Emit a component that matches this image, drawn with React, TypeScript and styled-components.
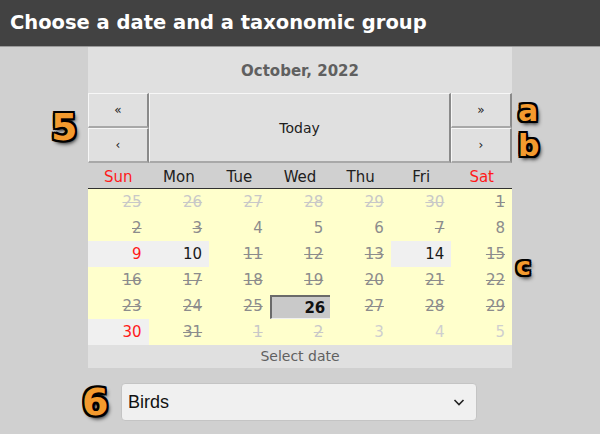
import styled, { createGlobalStyle } from "styled-components";

const GlobalStyle = createGlobalStyle`
    html, body {
        margin: 0;
        padding: 0;
        background: #d0d0d0;
    }
    body {
        font-family: "DejaVu Sans", Verdana, sans-serif;
    }
`;

const Page = styled.div`
    position: relative;
    width: 600px;
    height: 434px;
    overflow: hidden;
    background: #d0d0d0;
`;

const Header = styled.div`
    height: 47px;
    background: #424242;
    color: #ffffff;
    font-weight: bold;
    font-size: 19.5px;
    line-height: 46px;
    padding-left: 10px;
    border-bottom: 1px solid #9a9a9a;
    box-sizing: border-box;
`;

const Calendar = styled.div`
    width: 424px;
    margin: 0 auto;
    background: #e0e0e0;
`;

const MonthTitle = styled.div`
    height: 46px;
    line-height: 48px;
    text-align: center;
    font-weight: bold;
    font-size: 15px;
    color: #606060;
`;

const NavRow = styled.div`
    display: grid;
    grid-template-columns: 61px 1fr 61px;
    grid-template-rows: 35px 35px;
    height: 70px;
`;

const NavButton = styled.div<{col: number, row: number, tall?: boolean}>`
    grid-column: ${props => props.col};
    grid-row: ${props => props.tall ? "1 / span 2" : props.row};
    display: flex;
    align-items: center;
    justify-content: center;
    box-sizing: border-box;
    background: #e0e0e0;
    border-style: solid;
    border-width: 1px 2px 2px 1px;
    border-color: #f7f7f7 #8a8a8a #a8a8a8 #f7f7f7;
    font-size: ${props => props.tall ? "14px" : "12px"};
    color: #202020;
`;

const DayHeadRow = styled.div`
    display: grid;
    grid-template-columns: repeat(7, 1fr);
    height: 26px;
    background: #d0d0d0;
    border-bottom: 1px solid #303030;
    box-sizing: border-box;
`;

const DayHead = styled.div<{weekend: boolean}>`
    display: flex;
    align-items: center;
    justify-content: center;
    padding-top: 2px;
    font-size: 15px;
    color: ${props => props.weekend ? "#ff1a1a" : "#202020"};
`;

const DaysGrid = styled.div`
    display: grid;
    grid-template-columns: repeat(7, 1fr);
    grid-auto-rows: 26px;
    background: #ffffcc;
`;

type Kind = "other" | "off" | "offPlain" | "on" | "onRed" | "selected" | "otherPlain";

const colours: Record<Kind, string> = {
    other: "#c8c8c8",
    otherPlain: "#cfcfcf",
    off: "#8c8c8c",
    offPlain: "#8c8c8c",
    on: "#1a1a1a",
    onRed: "#ff1a1a",
    selected: "#111111",
};

const DayCell = styled.div<{kind: Kind}>`
    display: flex;
    align-items: center;
    justify-content: flex-end;
    padding-right: 7px;
    box-sizing: border-box;
    font-size: 15px;
    color: ${props => colours[props.kind]};
    text-decoration: ${props => (props.kind === "other" || props.kind === "off") ? "line-through" : "none"};
    background: ${props => props.kind === "on" || props.kind === "onRed" ? "#f0f0f0" : props.kind === "selected" ? "#c9c9c9" : "transparent"};
    font-weight: ${props => props.kind === "selected" ? "bold" : "normal"};
    ${props => props.kind === "selected" ? `
        border-top: 2px solid #6a6a6a;
        border-left: 2px solid #6a6a6a;
        border-bottom: 1px solid #f0f0f0;
        margin: 2px 0 0 0;
        padding-right: 5px;
    ` : ""}
`;

const Footer = styled.div`
    height: 23px;
    line-height: 23px;
    text-align: center;
    font-size: 14px;
    color: #606060;
    background: #e0e0e0;
`;

const GroupRow = styled.div`
    width: 356px;
    margin: 15px 0 0 121px;
    position: relative;
`;

const Select = styled.div`
    height: 38px;
    box-sizing: border-box;
    background: #f0f0f0;
    border: 1px solid #c4c4c4;
    border-radius: 4px;
    display: flex;
    align-items: center;
    justify-content: space-between;
    padding: 0 10px 0 6px;
    font-family: "Liberation Sans", Arial, sans-serif;
    font-size: 18px;
    color: #111;
`;

const Badge = styled.div<{x: number, y: number, size: number}>`
    position: absolute;
    left: ${props => props.x}px;
    top: ${props => props.y}px;
    font-family: "DejaVu Sans", sans-serif;
    font-weight: bold;
    font-size: ${props => props.size}px;
    line-height: 1;
    color: #f39a2e;
    text-shadow:
        -2px -2px 0 #000, 2px -2px 0 #000, -2px 2px 0 #000, 2px 2px 0 #000,
        0 -2px 0 #000, 0 2px 0 #000, -2px 0 0 #000, 2px 0 0 #000,
        2px 3px 4px #000;
`;

const dayNames = ["Sun", "Mon", "Tue", "Wed", "Thu", "Fri", "Sat"];

const days: [string, Kind][] = [
    ["25", "other"], ["26", "other"], ["27", "other"], ["28", "other"], ["29", "other"], ["30", "other"], ["1", "off"],
    ["2", "off"], ["3", "off"], ["4", "offPlain"], ["5", "offPlain"], ["6", "offPlain"], ["7", "off"], ["8", "offPlain"],
    ["9", "onRed"], ["10", "on"], ["11", "off"], ["12", "off"], ["13", "off"], ["14", "on"], ["15", "off"],
    ["16", "off"], ["17", "off"], ["18", "off"], ["19", "off"], ["20", "off"], ["21", "off"], ["22", "off"],
    ["23", "off"], ["24", "off"], ["25", "off"], ["26", "selected"], ["27", "off"], ["28", "off"], ["29", "off"],
    ["30", "onRed"], ["31", "off"], ["1", "other"], ["2", "other"], ["3", "otherPlain"], ["4", "otherPlain"], ["5", "otherPlain"],
];

export default function App() {
    return <Page>
        <GlobalStyle/>
        <Header>Choose a date and a taxonomic group</Header>
        <Calendar>
            <MonthTitle>October, 2022</MonthTitle>
            <NavRow>
                <NavButton col={1} row={1}>«</NavButton>
                <NavButton col={1} row={2}>‹</NavButton>
                <NavButton col={2} row={1} tall>Today</NavButton>
                <NavButton col={3} row={1}>»</NavButton>
                <NavButton col={3} row={2}>›</NavButton>
            </NavRow>
            <DayHeadRow>
                {dayNames.map((d, i) => <DayHead key={d} weekend={i === 0 || i === 6}>{d}</DayHead>)}
            </DayHeadRow>
            <DaysGrid>
                {days.map(([n, kind], i) => <DayCell key={i} kind={kind}>{n}</DayCell>)}
            </DaysGrid>
            <Footer>Select date</Footer>
        </Calendar>
        <GroupRow>
            <Select>
                <span>Birds</span>
                <svg width="14" height="14" viewBox="0 0 14 14">
                    <path d="M2.5 5 L7 9.5 L11.5 5" fill="none" stroke="#222" strokeWidth="1.6"/>
                </svg>
            </Select>
        </GroupRow>
        <Badge x={51} y={108} size={38}>5</Badge>
        <Badge x={518} y={96} size={30}>a</Badge>
        <Badge x={518} y={131} size={30}>b</Badge>
        <Badge x={516} y={254} size={25}>c</Badge>
        <Badge x={82} y={383} size={38}>6</Badge>
    </Page>;
}
